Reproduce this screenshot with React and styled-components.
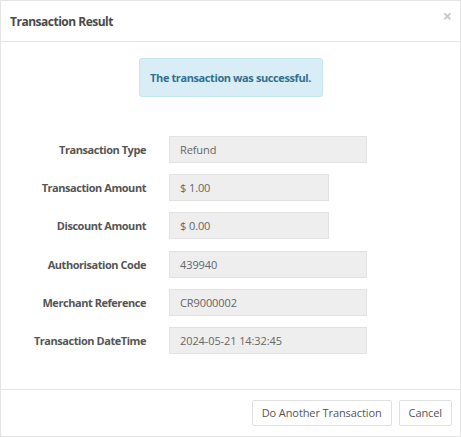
import React from "react";
import styled, { createGlobalStyle } from "styled-components";

const Global = createGlobalStyle`
  html, body { margin: 0; padding: 0; background: #fff; }
  body { font-family: "Open Sans", "Liberation Sans", sans-serif; }
  * { box-sizing: border-box; }
`;

const Modal = styled.div`
  width: 461px;
  height: 437px;
  border: 1px solid #e4e4e4;
  display: flex;
  flex-direction: column;
  background: #fff;
`;

const Header = styled.div`
  position: relative;
  height: 41px;
  border-bottom: 1px solid #e5e5e5;
  display: flex;
  align-items: center;
  padding: 0 9px;
`;

const Title = styled.h4`
  margin: 0;
  font-size: 12px;
  font-weight: 700;
  letter-spacing: -0.5px;
  color: #4a4a4a;
`;

const Close = styled.button`
  position: absolute;
  right: 8px;
  top: 7px;
  border: 0;
  background: none;
  padding: 0;
  font-family: "Open Sans", sans-serif;
  font-size: 16px;
  font-weight: 700;
  line-height: 16px;
  color: #c8c8c8;
`;

const Body = styled.div`
  flex: 1;
  display: flex;
  flex-direction: column;
  align-items: center;
  padding-top: 16px;
`;

const Alert = styled.div`
  width: 184px;
  height: 39px;
  background: #d9edf7;
  border: 1px solid #c4e5f2;
  border-radius: 3px;
  color: #31708f;
  font-size: 11px;
  font-weight: 700;
  letter-spacing: -0.4px;
  display: flex;
  align-items: center;
  justify-content: center;
`;

const Form = styled.div`
  align-self: stretch;
  margin-top: 39px;
  display: grid;
  grid-template-columns: 145px auto;
  column-gap: 23px;
  row-gap: 11.2px;
  justify-content: start;
`;

const Label = styled.label`
  text-align: right;
  font-size: 11px;
  font-weight: 700;
  letter-spacing: -0.45px;
  color: #555;
  align-self: center;
`;

const Field = styled.div`
  width: ${(p) => (p.$short ? "160px" : "198px")};
  height: 27px;
  background: #eee;
  border: 1px solid #e2e2e2;
  padding: 0 10px;
  display: flex;
  align-items: center;
  font-size: 11px;
  letter-spacing: -0.1px;
  color: #666;
`;

const Footer = styled.div`
  height: 47px;
  border-top: 1px solid #e5e5e5;
  display: flex;
  justify-content: flex-end;
  align-items: center;
  gap: 7px;
  padding: 0 8px 1px;
`;

const Button = styled.button`
  height: 26px;
  padding: 0 9px;
  background: #fff;
  border: 1px solid #e0e0e0;
  border-radius: 2px;
  font-family: "Open Sans", sans-serif;
  font-size: 11px;
  letter-spacing: -0.1px;
  color: #555;
`;

const rows = [
  ["Transaction Type", "Refund", false],
  ["Transaction Amount", "$ 1.00", true],
  ["Discount Amount", "$ 0.00", true],
  ["Authorisation Code", "439940", false],
  ["Merchant Reference", "CR9000002", false],
  ["Transaction DateTime", "2024-05-21 14:32:45", false],
];

export default function App() {
  return (
    <>
      <Global />
      <Modal>
        <Header>
          <Title>Transaction Result</Title>
          <Close aria-label="Close">×</Close>
        </Header>
        <Body>
          <Alert>The transaction was successful.</Alert>
          <Form>
            {rows.map(([label, value, short]) => (
              <React.Fragment key={label}>
                <Label>{label}</Label>
                <Field $short={short}>{value}</Field>
              </React.Fragment>
            ))}
          </Form>
        </Body>
        <Footer>
          <Button>Do Another Transaction</Button>
          <Button>Cancel</Button>
        </Footer>
      </Modal>
    </>
  );
}
